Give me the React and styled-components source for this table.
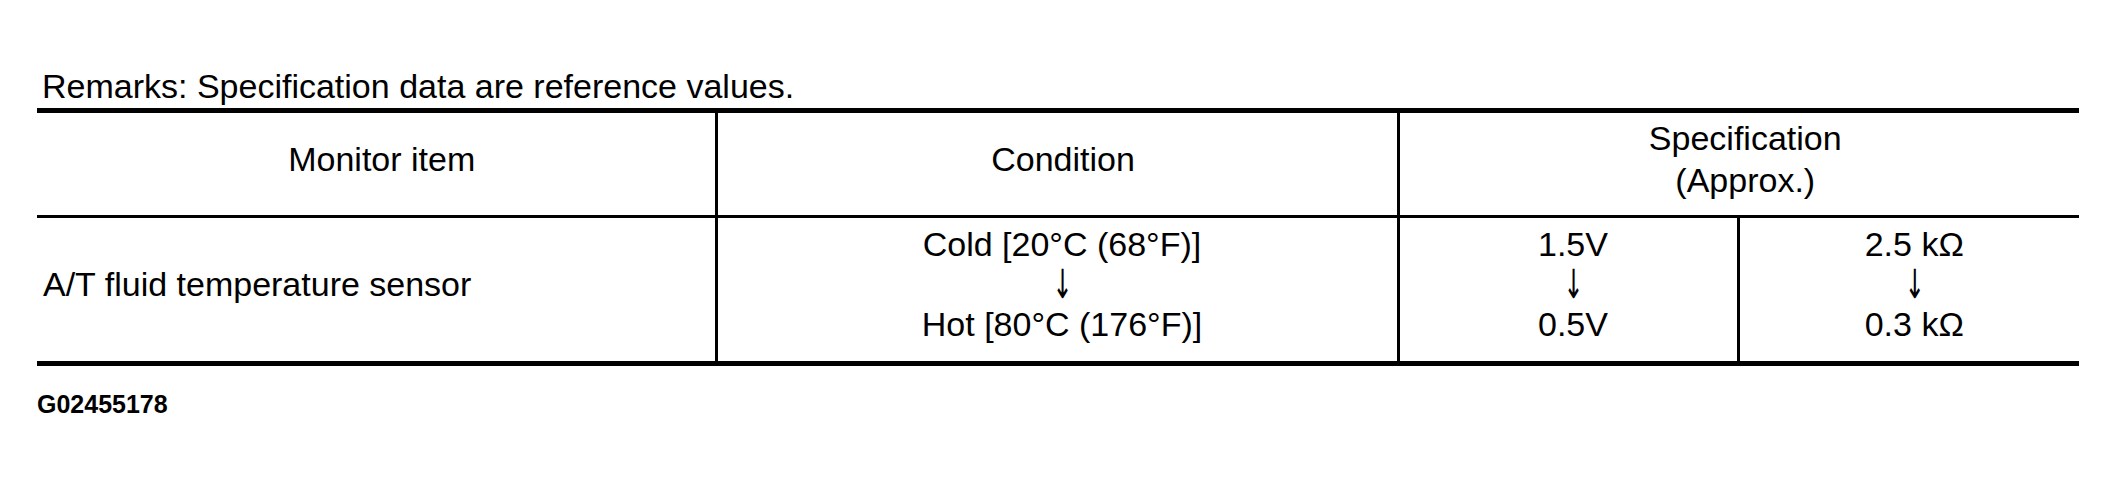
import React from "react";
import styled, { createGlobalStyle } from "styled-components";

const GlobalStyle = createGlobalStyle`
  body {
    margin: 0;
    background: #ffffff;
    color: #000000;
    font-family: "Liberation Sans", Arial, Helvetica, sans-serif;
  }
`;

const Page = styled.div`
  padding: 67px 0 0 37px;
  width: 2042px;
`;

const Remarks = styled.div`
  font-size: 34px;
  line-height: 38px;
  padding-left: 5px;
  margin-bottom: 3px;
`;

const SpecTable = styled.table`
  width: 2042px;
  border-collapse: collapse;
  table-layout: fixed;
  border-top: 5px solid #000;
  border-bottom: 5px solid #000;
  font-size: 34px;
`;

const HeadCell = styled.th`
  font-weight: normal;
  height: 91px;
  padding: 0 0 11px 12px;
  line-height: 42px;
  text-align: center;
  vertical-align: middle;
  border-bottom: 3px solid #000;
  border-left: ${(p) => (p.$first ? "none" : "3px solid #000")};
`;

const BodyCell = styled.td`
  height: 132px;
  padding: 0 0 11px ${(p) => (p.$left ? "6px" : "10px")};
  line-height: 40px;
  text-align: ${(p) => (p.$left ? "left" : "center")};
  vertical-align: middle;
  border-left: ${(p) => (p.$first ? "none" : "3px solid #000")};
`;

const Arrow = styled.span`
  display: block;
  height: 40px;
  line-height: 40px;
  font-family: "DejaVu Sans", sans-serif;
  font-size: 40px;
  transform: scaleX(0.6);
`;

const Code = styled.div`
  margin-top: 24px;
  font-size: 25px;
  line-height: 28px;
  font-weight: bold;
`;

const Stack = ({ top, bottom }) => (
  <>
    {top}
    <Arrow>↓</Arrow>
    {bottom}
  </>
);

const App = () => {
  return (
    <Page>
      <GlobalStyle />
      <Remarks>Remarks: Specification data are reference values.</Remarks>
      <SpecTable>
        <colgroup>
          <col style={{ width: 679 }} />
          <col style={{ width: 682 }} />
          <col style={{ width: 340 }} />
          <col style={{ width: 341 }} />
        </colgroup>
        <thead>
          <tr>
            <HeadCell $first>Monitor item</HeadCell>
            <HeadCell>Condition</HeadCell>
            <HeadCell colSpan={2}>
              Specification
              <br />
              (Approx.)
            </HeadCell>
          </tr>
        </thead>
        <tbody>
          <tr>
            <BodyCell $first $left>
              A/T fluid temperature sensor
            </BodyCell>
            <BodyCell>
              <Stack top="Cold [20°C (68°F)]" bottom="Hot [80°C (176°F)]" />
            </BodyCell>
            <BodyCell>
              <Stack top="1.5V" bottom="0.5V" />
            </BodyCell>
            <BodyCell>
              <Stack top="2.5 kΩ" bottom="0.3 kΩ" />
            </BodyCell>
          </tr>
        </tbody>
      </SpecTable>
      <Code>G02455178</Code>
    </Page>
  );
};

export default App;
